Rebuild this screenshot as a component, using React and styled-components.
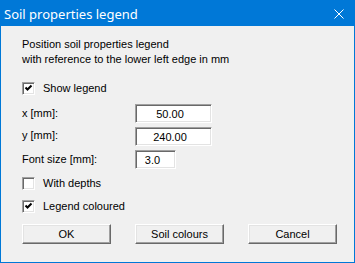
import React from "react";
import styled, { createGlobalStyle } from "styled-components";

const GlobalStyle = createGlobalStyle`
  html, body {
    margin: 0;
    padding: 0;
    background: #f0f0f0;
  }
`;

const Window = styled.div`
  width: 355px;
  height: 263px;
  box-sizing: border-box;
  border: 1px solid #0078d7;
  background: #f0f0f0;
  display: flex;
  flex-direction: column;
  font-family: "Liberation Sans", Arial, sans-serif;
  font-size: 11px;
  color: #000;
`;

const TitleBar = styled.div`
  height: 25px;
  background: #0078d7;
  color: #fff;
  display: flex;
  align-items: center;
  justify-content: space-between;
  padding: 0 10px 0 3px;
  font-family: "Noto Sans", "Open Sans", sans-serif;
  font-size: 13px;
`;

const Body = styled.div`
  padding: 11px 0 0 21px;
  display: flex;
  flex-direction: column;
`;

const Intro = styled.div`
  line-height: 15px;
`;

const Row = styled.div`
  display: flex;
  align-items: center;
  height: ${(p) => p.h}px;
  margin-top: ${(p) => p.mt || 0}px;
`;

const CheckBox = styled.span`
  width: 13px;
  height: 13px;
  box-sizing: border-box;
  background: #fff;
  border-top: 1px solid #a0a0a0;
  border-left: 1px solid #a0a0a0;
  border-bottom: 1px solid #fff;
  border-right: 1px solid #fff;
  box-shadow: inset 1px 1px #696969, inset -1px -1px #e3e3e3;
  display: flex;
  flex: none;
`;

const CheckLabel = styled.span`
  margin-left: 8px;
  line-height: 13px;
`;

const FieldLabel = styled.span`
  width: 113px;
  line-height: 13px;
  margin-top: ${(p) => p.shift || 0}px;
`;

const Field = styled.div`
  width: ${(p) => p.w}px;
  height: 19px;
  box-sizing: border-box;
  background: #fff;
  border-top: 1px solid #a0a0a0;
  border-left: 1px solid #a0a0a0;
  border-bottom: 1px solid #fff;
  border-right: 1px solid #fff;
  box-shadow: inset 1px 1px #696969, inset -1px -1px #e3e3e3;
  display: flex;
  align-items: center;
  justify-content: center;
  padding-right: ${(p) => p.pr}px;
`;

const Buttons = styled.div`
  display: flex;
  gap: 24px;
  margin-top: 11px;
`;

const Button = styled.div`
  width: 89px;
  height: 20px;
  box-sizing: border-box;
  background: #f0f0f0;
  border-top: 1px solid #fff;
  border-left: 1px solid #fff;
  border-bottom: 1px solid #696969;
  border-right: 1px solid #696969;
  box-shadow: inset -1px -1px #a0a0a0, inset 1px 1px #e3e3e3;
  display: flex;
  align-items: center;
  justify-content: center;
`;

const Check = ({ checked }) => (
  <CheckBox>
    {checked && (
      <svg width="11" height="11" viewBox="0 0 11 11">
        <polyline points="2.5,4.5 4.5,6.5 8.5,2.5" fill="none" stroke="#000" strokeWidth="2" />
      </svg>
    )}
  </CheckBox>
);

export default function App() {
  return (
    <>
      <GlobalStyle />
      <Window>
        <TitleBar>
          <span>Soil properties legend</span>
          <svg width="10" height="10" viewBox="0 0 10 10">
            <path d="M0.5 0.5L9.5 9.5M9.5 0.5L0.5 9.5" stroke="#fff" strokeWidth="1" />
          </svg>
        </TitleBar>
        <Body>
          <Intro>
            Position soil properties legend
            <br />
            with reference to the lower left edge in mm
          </Intro>
          <Row h={13} mt={15}>
            <Check checked />
            <CheckLabel>Show legend</CheckLabel>
          </Row>
          <Row h={19} mt={9}>
            <FieldLabel>x [mm]:</FieldLabel>
            <Field w={77} pr={7}>50.00</Field>
          </Row>
          <Row h={19} mt={4}>
            <FieldLabel shift={-2}>y [mm]:</FieldLabel>
            <Field w={77} pr={7}>240.00</Field>
          </Row>
          <Row h={19} mt={4}>
            <FieldLabel shift={-1}>Font size [mm]:</FieldLabel>
            <Field w={41} pr={6}>3.0</Field>
          </Row>
          <Row h={13} mt={8}>
            <Check />
            <CheckLabel>With depths</CheckLabel>
          </Row>
          <Row h={13} mt={10}>
            <Check checked />
            <CheckLabel>Legend coloured</CheckLabel>
          </Row>
          <Buttons>
            <Button>OK</Button>
            <Button>Soil colours</Button>
            <Button>Cancel</Button>
          </Buttons>
        </Body>
      </Window>
    </>
  );
}
